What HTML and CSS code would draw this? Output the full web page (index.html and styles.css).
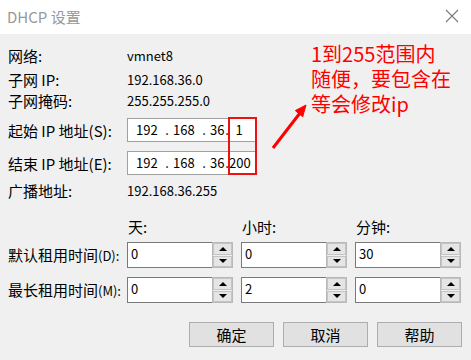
FILE: index.html
```html
<!DOCTYPE html>
<html lang="zh-CN">
<head>
<meta charset="utf-8">
<title>DHCP 设置</title>
<link rel="stylesheet" href="styles.css">
</head>
<body>
<div class="window">
  <div class="titlebar">
    <span class="title">DHCP 设置</span>
    <svg class="close" width="14" height="14" viewBox="0 0 14 14"><path d="M1 1 L13 13 M13 1 L1 13" stroke="#7a7a7a" stroke-width="1.1" fill="none"/></svg>
  </div>
  <div class="content">
    <div class="info">
      <div class="lbl">网络:</div><div class="val">vmnet8</div>
      <div class="lbl">子网 IP:</div><div class="val">192.168.36.0</div>
      <div class="lbl">子网掩码:</div><div class="val">255.255.255.0</div>
      <div class="lbl tall">起始 IP 地址(S):</div>
      <div class="ipbox"><span class="s1">192</span><span class="d1">.</span><span class="s2">168</span><span class="d2">.</span><span class="s3">36</span><span class="d3">.</span><span class="s4">1</span></div>
      <div class="lbl tall">结束 IP 地址(E):</div>
      <div class="ipbox"><span class="s1">192</span><span class="d1">.</span><span class="s2">168</span><span class="d2">.</span><span class="s3">36</span><span class="d3">.</span><span class="s4">200</span></div>
      <div class="lbl">广播地址:</div><div class="val">192.168.36.255</div>
    </div>

    <div class="lease">
      <div></div>
      <div class="hdr">天:</div>
      <div class="hdr">小时:</div>
      <div class="hdr">分钟:</div>

      <div class="lbl tall2">默认租用时间<span class="acc">(D):</span></div>
      <div class="spin"><div class="field">0</div><div class="ud"><div class="btn up"></div><div class="btn down"></div></div></div>
      <div class="spin"><div class="field">0</div><div class="ud"><div class="btn up"></div><div class="btn down"></div></div></div>
      <div class="spin"><div class="field">30</div><div class="ud"><div class="btn up"></div><div class="btn down"></div></div></div>

      <div class="lbl tall2">最长租用时间<span class="acc">(M):</span></div>
      <div class="spin"><div class="field">0</div><div class="ud"><div class="btn up"></div><div class="btn down"></div></div></div>
      <div class="spin"><div class="field">2</div><div class="ud"><div class="btn up"></div><div class="btn down"></div></div></div>
      <div class="spin"><div class="field">0</div><div class="ud"><div class="btn up"></div><div class="btn down"></div></div></div>
    </div>

    <div class="buttons">
      <button class="pb">确定</button>
      <button class="pb">取消</button>
      <button class="pb">帮助</button>
    </div>
  </div>

  <div class="note"><div class="nl">1到255范围内</div><div class="nl">随便，要包含在</div><div class="nl">等会修改ip</div></div>
  <div class="redbox"></div>
  <svg class="arrow" width="471" height="360" viewBox="0 0 471 360">
    <line x1="273" y1="148" x2="300" y2="113" stroke="#ff0000" stroke-width="3"/>
    <polygon points="306,105 302.7,116.8 295.3,110.6" fill="#ff0000" stroke="#ff0000" stroke-width="1"/>
  </svg>
</div>
</body>
</html>
```

FILE: styles.css
```css
html, body {
  margin: 0;
  padding: 0;
}
body {
  width: 471px;
  height: 360px;
  overflow: hidden;
  background: #f0f0f0;
  font-family: "Noto Sans CJK SC", "Noto Sans", sans-serif;
  color: #000;
}
.window {
  position: relative;
  width: 471px;
  height: 360px;
  background: #f0f0f0;
}
.titlebar {
  height: 34px;
  background: #fff;
  display: flex;
  align-items: center;
  justify-content: space-between;
  padding: 0 12px 0 7px;
}
.title {
  font-size: 15px;
  color: #999;
  line-height: 20px;
}
.close {
  display: block;
  margin-top: -2px;
}
.content {
  padding-left: 8px;
}
.info {
  display: grid;
  grid-template-columns: 119px 140px;
  grid-template-rows: 24px 21px 27px 33px 30px 20px;
  align-items: start;
  padding-top: 12px;
}
.lbl {
  font-size: 15px;
  line-height: 20px;
  white-space: nowrap;
}
.lbl.tall {
  line-height: 25px;
}
.lbl.tall2 {
  line-height: 26px;
}
.acc {
  font-size: 13px;
}
.val {
  font-size: 13px;
  line-height: 20px;
}
.ipbox {
  box-sizing: border-box;
  width: 129px;
  height: 24px;
  border: 1px solid #a0a0a0;
  background: #fff;
  display: flex;
  align-items: center;
  font-size: 13px;
  line-height: 20px;
  padding-left: 8px;
}
.ipbox span {
  display: block;
  flex: none;
}
.s1 { width: 25px; }
.d1 { width: 12px; text-align: center; }
.s2 { width: 25px; }
.d2 { width: 12px; text-align: center; }
.s3 { width: 15px; }
.d3 { width: 4px; text-align: center; }
.s4 { width: 20px; text-align: center; }

.lease {
  display: grid;
  grid-template-columns: 111px 106px 106px 106px;
  column-gap: 8px;
  grid-template-rows: 25px 35px 26px;
  align-items: start;
  margin-top: 16px;
}
.hdr {
  font-size: 15px;
  line-height: 20px;
  padding-left: 1px;
}
.spin {
  display: flex;
  height: 26px;
}
.field {
  box-sizing: border-box;
  flex: 1;
  height: 26px;
  background: #fff;
  border: 1px solid #7a7a7a;
  border-right: none;
  font-size: 13px;
  line-height: 18px;
  padding: 2px 0 0 3px;
}
.ud {
  box-sizing: border-box;
  width: 21px;
  height: 26px;
  border: 1px solid #b9b9b9;
  background: #f0f0f0;
  display: flex;
  flex-direction: column;
  gap: 1px;
}
.btn {
  flex: 1;
  background: #e5e5e5;
  border: 1px solid #c4c4c4;
  display: flex;
  align-items: center;
  justify-content: center;
}
.btn.up::before {
  content: "";
  border-left: 4px solid transparent;
  border-right: 4px solid transparent;
  border-bottom: 4px solid #000;
}
.btn.down::before {
  content: "";
  border-left: 4px solid transparent;
  border-right: 4px solid transparent;
  border-top: 4px solid #000;
}
.buttons {
  display: flex;
  justify-content: flex-end;
  gap: 9px;
  padding-right: 9px;
  margin-top: 19px;
}
.pb {
  box-sizing: border-box;
  width: 85px;
  height: 25px;
  background: #e1e1e1;
  border: 1px solid #adadad;
  font-family: "Noto Sans CJK SC", sans-serif;
  font-size: 15px;
  line-height: 21px;
  color: #000;
  padding: 0;
}
.note {
  position: absolute;
  left: 311px;
  top: 41px;
  font-size: 20px;
  color: #ff0000;
  white-space: nowrap;
}
.nl {
  height: 25px;
  line-height: 25px;
}
.redbox {
  position: absolute;
  left: 228px;
  top: 117px;
  width: 25px;
  height: 54px;
  border: 2px solid #ee1111;
}
.arrow {
  position: absolute;
  left: 0;
  top: 0;
  pointer-events: none;
}
```
